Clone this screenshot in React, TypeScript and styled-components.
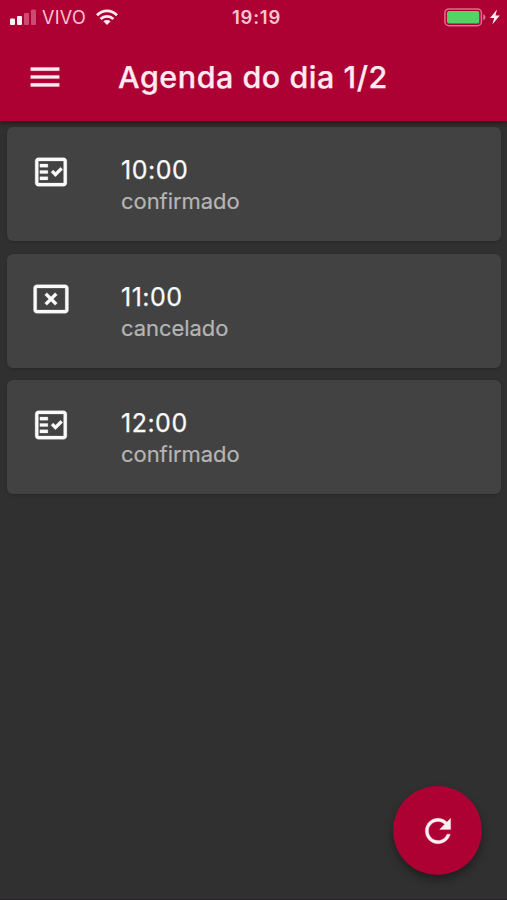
import React from "react";
import styled, { createGlobalStyle } from "styled-components";

const GlobalStyle = createGlobalStyle`
  * { box-sizing: border-box; }
  body { margin: 0; background: #303030; font-family: Inter, "Liberation Sans", sans-serif; }
`;

const Screen = styled.div`
  position: relative;
  display: flex;
  flex-direction: column;
  width: 100%;
  height: 900px;
  overflow: hidden;
  background: #303030;
  border-bottom: 1px solid #282226;
`;

const Header = styled.header`
  position: relative;
  height: 121px;
  background: #ad0033;
  color: #ffeaf1;
  box-shadow: 0 2px 5px rgba(0, 0, 0, 0.45);
`;

const StatusBar = styled.div`
  display: grid;
  grid-template-columns: 1fr auto 1fr;
  align-items: center;
  height: 34px;
  padding: 0 7px 0 10px;
  color: #f8c4d4;
`;

const StatusGroup = styled.div<{ $end?: boolean }>`
  display: flex;
  align-items: center;
  justify-content: ${({ $end }) => ($end ? "flex-end" : "flex-start")};
  gap: ${({ $end }) => ($end ? "3px" : "0")};
`;

const Carrier = styled.span`
  margin: 0 10px 0 6px;
  padding-top: 1px;
  font-size: 18px;
  line-height: 22px;
  letter-spacing: 0.3px;
`;

const Clock = styled.span`
  font-size: 18.5px;
  line-height: 22px;
  font-weight: 600;
  letter-spacing: 0.8px;
  padding-left: 3px;
`;

const Toolbar = styled.div`
  display: flex;
  align-items: center;
  height: 86px;
  padding-left: 26px;
`;

const IconButton = styled.button`
  display: flex;
  padding: 0;
  border: 0;
  background: none;
  color: inherit;
`;

const Title = styled.h1`
  margin: 0 0 0 54px;
  font-size: 30.5px;
  line-height: 40px;
  font-weight: 500;
  letter-spacing: 0.52px;
  white-space: nowrap;
  -webkit-text-stroke: 0.25px currentColor;
`;

const Agenda = styled.main`
  display: flex;
  flex-direction: column;
  gap: 12.7px;
  padding: 6px 6px 0 7px;
`;

const Card = styled.article`
  display: flex;
  align-items: flex-start;
  height: 114px;
  padding: 26px 25px;
  border-radius: 6px;
  background: #424242;
  color: #fafafa;
  box-shadow: 0 1px 3px rgba(0, 0, 0, 0.2);
`;

const Details = styled.div`
  margin-left: 51px;
`;

const Time = styled.div`
  font-size: 25px;
  line-height: 34px;
  letter-spacing: 0.5px;
  -webkit-text-stroke: 0.25px currentColor;
`;

const Status = styled.div`
  font-size: 22px;
  line-height: 28px;
  letter-spacing: -0.05px;
  color: #b5b5b5;
  -webkit-text-stroke: 0.2px currentColor;
`;

const RefreshButton = styled.button`
  position: absolute;
  right: 25px;
  bottom: 24px;
  display: flex;
  align-items: center;
  justify-content: center;
  width: 89px;
  height: 89px;
  padding: 0;
  border: 0;
  border-radius: 50%;
  background: #ad0033;
  color: #ffeff5;
  box-shadow: 0 5px 9px rgba(0, 0, 0, 0.36);
`;

const Glyph = styled.svg`
  display: block;
  width: 38px;
  height: 38px;
  fill: currentColor;
  stroke: currentColor;
  stroke-width: 0.2px;
`;

const MenuIcon = () => (
  <Glyph viewBox="0 0 24 24"><path d="M3 18h18v-2H3v2zm0-5h18v-2H3v2zm0-7v2h18V6H3z" /></Glyph>
);

const ConfirmedIcon = () => (
  <Glyph viewBox="0 0 24 24">
    <path fillRule="evenodd" d="M20 3H4c-1.1 0-2 .9-2 2v14c0 1.1.9 2 2 2h16c1.1 0 2-.9 2-2V5c0-1.1-.9-2-2-2zm0 16H4V5h16v14z" />
    <path d="M19.41 10.42 17.99 9l-3.17 3.17-1.41-1.42L12 12.16 14.82 15zM5 7h5v2H5zM5 11h5v2H5zM5 15h5v2H5z" />
  </Glyph>
);

const CancelledIcon = () => (
  <Glyph viewBox="0 0 24 24">
    <path fillRule="evenodd" d="M21 3H3c-1.1 0-2 .9-2 2v14c0 1.1.9 2 2 2h18c1.1 0 2-.9 2-2V5c0-1.1-.9-2-2-2zm0 16H3V5h18v14z" />
    <path d="M14.59 8 12 10.59 9.41 8 8 9.41 10.59 12 8 14.59 9.41 16 12 13.41 14.59 16 16 14.59 13.41 12 16 9.41z" />
  </Glyph>
);

const RefreshIcon = () => (
  <Glyph viewBox="0 0 24 24">
    <path d="M17.65 6.35C16.2 4.9 14.21 4 12 4c-4.42 0-7.99 3.58-7.99 8s3.57 8 7.99 8c3.73 0 6.84-2.55 7.73-6h-2.08c-.82 2.33-3.04 4-5.65 4-3.31 0-6-2.69-6-6s2.69-6 6-6c1.66 0 3.14.69 4.22 1.78L13 11h7V4l-2.35 2.35z" />
  </Glyph>
);

const SignalIcon = () => (
  <svg width="26" height="17" viewBox="0 0 26 17">
    <g fill="#fff2f6">
      <rect x="0" y="9.5" width="5" height="6.5" rx="1" />
      <rect x="7" y="7" width="5" height="9" rx="1" />
    </g>
    <g fill="#cf4972">
      <rect x="14" y="4" width="5" height="12" rx="1" />
      <rect x="21" y="0.5" width="5" height="15.5" rx="1" />
    </g>
  </svg>
);

const WifiIcon = () => (
  <svg width="22" height="17" viewBox="0 0 22 17" fill="none" stroke="#ffeaf1" strokeWidth="2.8">
    <path d="M1 6.2C6.7.5 15.3.5 21 6.2" />
    <path d="M4.6 10C8.2 6.4 13.8 6.4 17.4 10" />
    <path d="M7.4 12.3c2.2-1.9 5-1.9 7.2 0L11 16z" fill="#ffeaf1" stroke="none" />
  </svg>
);

const BatteryIcon = () => (
  <svg width="43" height="19" viewBox="0 0 43 19">
    <rect x="0.9" y="0.9" width="36.5" height="16.8" rx="4" fill="none" stroke="#dc6e90" strokeWidth="1.5" />
    <rect x="3" y="3" width="32.3" height="12.6" rx="2" fill="#51d464" />
    <path d="M39.2 6.3c3 1.1 3 4.9 0 6z" fill="#dc6e90" />
  </svg>
);

const ChargingIcon = () => (
  <svg width="10" height="16" viewBox="0 0 10 16">
    <path d="M7 .5 0 9h4.2L2.3 15.5 9.8 6.6H5.5z" fill="#ffeaf1" />
  </svg>
);

const appointments = [
  { time: "10:00", status: "confirmado" },
  { time: "11:00", status: "cancelado" },
  { time: "12:00", status: "confirmado" },
];

export default function App() {
  return (
    <>
      <GlobalStyle />
      <Screen>
        <Header>
          <StatusBar>
            <StatusGroup>
              <SignalIcon />
              <Carrier>VIVO</Carrier>
              <WifiIcon />
            </StatusGroup>
            <Clock>19:19</Clock>
            <StatusGroup $end>
              <BatteryIcon />
              <ChargingIcon />
            </StatusGroup>
          </StatusBar>
          <Toolbar>
            <IconButton aria-label="Menu"><MenuIcon /></IconButton>
            <Title>Agenda do dia 1/2</Title>
          </Toolbar>
        </Header>
        <Agenda>
          {appointments.map(({ time, status }) => (
            <Card key={time}>
              {status === "cancelado" ? <CancelledIcon /> : <ConfirmedIcon />}
              <Details>
                <Time>{time}</Time>
                <Status>{status}</Status>
              </Details>
            </Card>
          ))}
        </Agenda>
        <RefreshButton aria-label="Atualizar"><RefreshIcon /></RefreshButton>
      </Screen>
    </>
  );
}
